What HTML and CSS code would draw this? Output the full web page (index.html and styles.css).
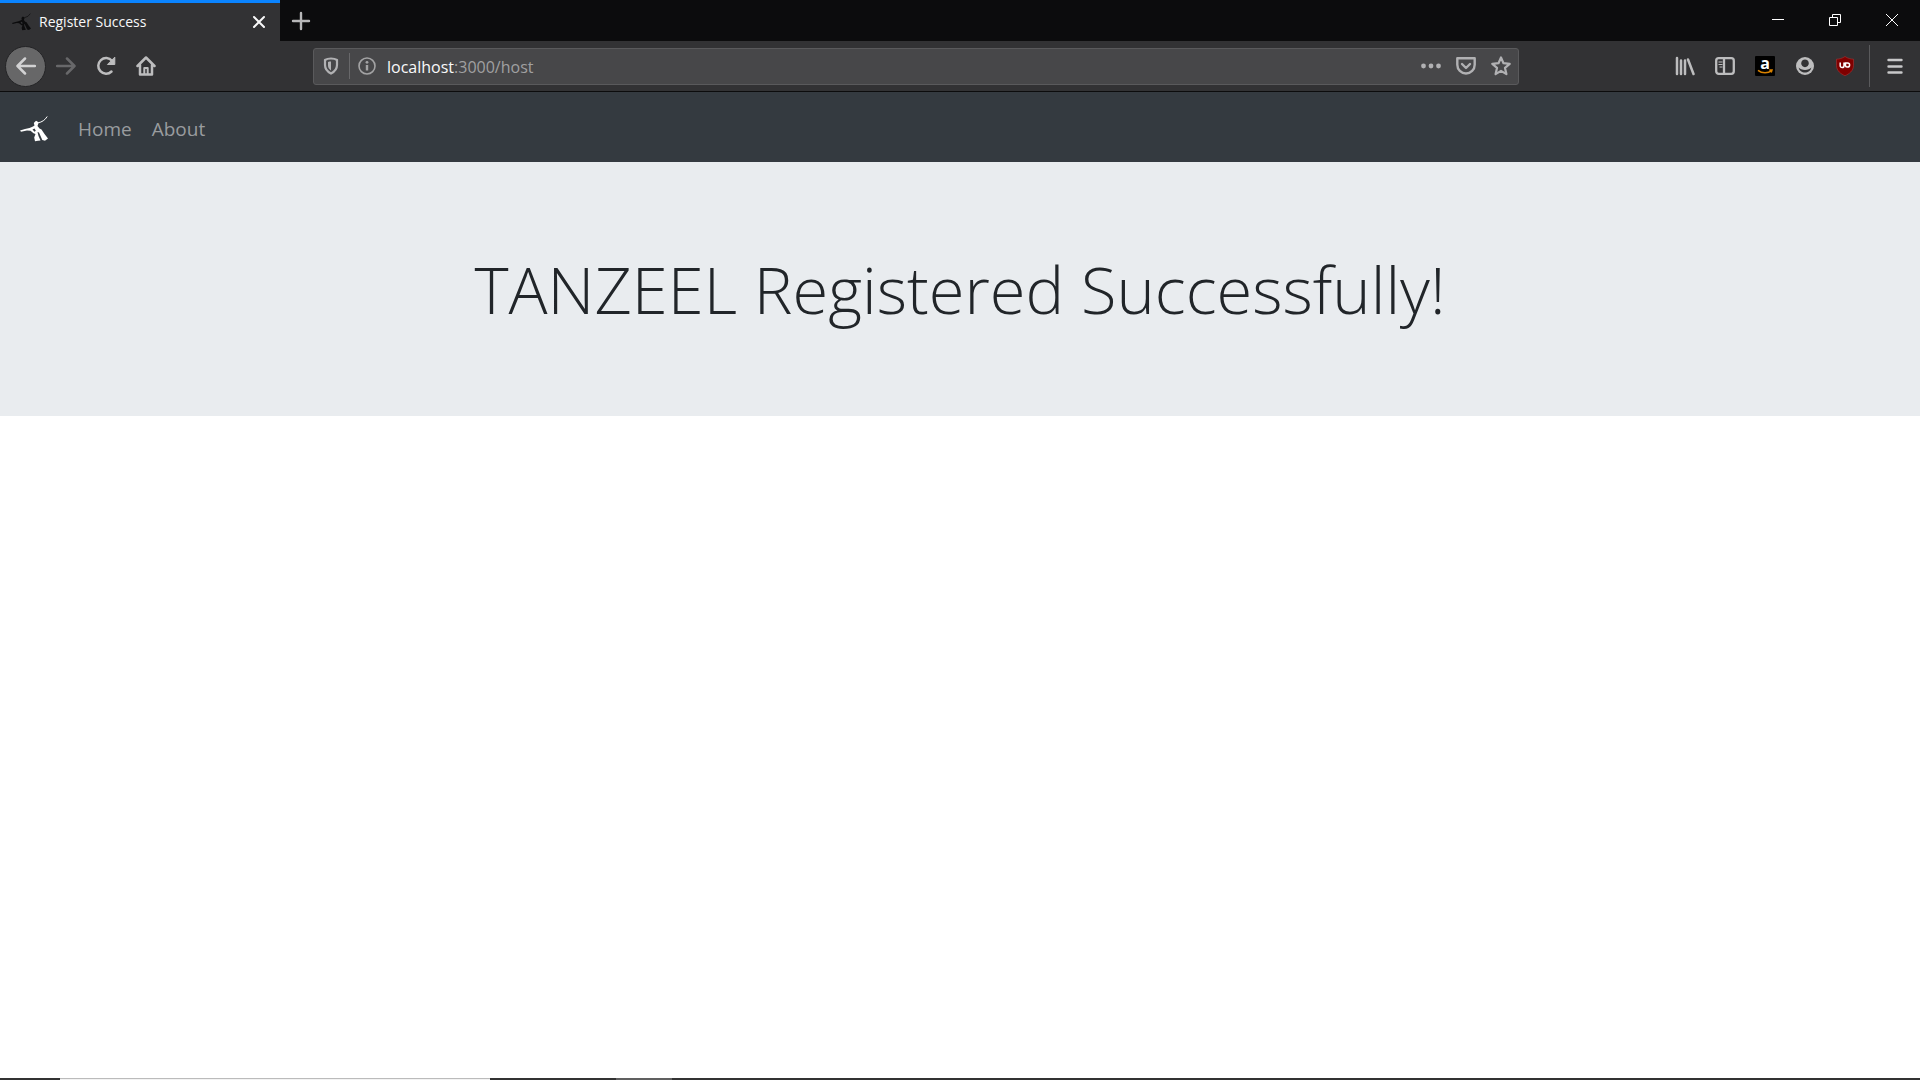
FILE: index.html
```html
<!DOCTYPE html>
<html lang="en">
<head>
<meta charset="utf-8">
<meta name="viewport" content="width=device-width, initial-scale=1">
<title>Register Success</title>
<link rel="stylesheet" href="styles.css">
</head>
<body>
<svg class="defs" aria-hidden="true">
  <symbol id="flutist" viewBox="0 0 28 26">
    <path d="M0 14.600L5 13L9.500 12L13 10.500L14.500 9.500L13.800 7L16 4.800L17.500 5.500L18.500 7L17.500 10L19.500 12.500L21.500 13.500L24.500 18L28 22.500L25 24.800L22.300 24L19 16.500L17.500 16L18.500 20L20.500 24.500L18 24.800L15 25.300L14.200 21.500L15.500 18L13.500 17.300L10.500 14.800L7 14.600L1 15.800ZM12.500 13.500L14.500 15.800L15.800 14.800L14.500 12.500Z" fill-rule="evenodd"/>
    <path d="M18 6.800Q24 5.800 27.200 .5" fill="none" stroke="currentColor"/>
  </symbol>
</svg>
<div class="window">
  <header class="browser">
    <div class="tabstrip">
      <div class="tab">
        <svg class="favicon" viewBox="0 0 28 26"><use href="#flutist"/></svg>
        <span class="tab-title">Register Success</span>
        <button class="tab-close" aria-label="Close tab"><svg width="14" height="14" viewBox="0 0 14 14"><path d="M2 2l10 10M12 2L2 12" stroke="#f9f9fa" stroke-width="2" stroke-linecap="round"/></svg></button>
      </div>
      <button class="new-tab" aria-label="New tab"><svg width="20" height="20" viewBox="0 0 20 20"><path d="M10 2v16M2 10h16" stroke="#b8b8b9" stroke-width="2.400" stroke-linecap="round"/></svg></button>
      <div class="window-controls">
        <button aria-label="Minimize"><svg width="14" height="14" viewBox="0 0 14 14"><path d="M1 6.500h12" stroke="#fff"/></svg></button>
        <button aria-label="Restore"><svg width="14" height="14" viewBox="0 0 14 14" fill="none" stroke="#fff"><path d="M1.500 4.500h8v8h-8zM4.500 4.500v-3h8v8h-3"/></svg></button>
        <button aria-label="Close"><svg width="14" height="14" viewBox="0 0 14 14"><path d="M1 1l12 12M13 1L1 13" stroke="#fff"/></svg></button>
      </div>
    </div>
    <div class="toolbar">
      <div class="nav-buttons">
        <button class="back" aria-label="Back"><svg width="20" height="20" viewBox="0 0 20 20" fill="none" stroke="#d2d2d3" stroke-width="2.500" stroke-linecap="round" stroke-linejoin="round"><path d="M19 10H2M9 2.500L1.500 10L9 17.500"/></svg></button>
        <button aria-label="Forward"><svg width="20" height="20" viewBox="0 0 20 20" fill="none" stroke="#68686a" stroke-width="2.500" stroke-linecap="round" stroke-linejoin="round"><path d="M1 10h17M11 2.500L18.500 10L11 17.500"/></svg></button>
        <button aria-label="Reload"><svg width="20" height="20" viewBox="0 0 20 20" fill="none" stroke="#bdbdbe" stroke-width="2.500" stroke-linecap="round"><path d="M15.500 15.500A7.800 7.800 0 1 1 16 4.800"/><path d="M18.800 1.500v7h-7z" fill="#bdbdbe" stroke-width="1" stroke-linejoin="round"/></svg></button>
        <button aria-label="Home page"><svg width="20" height="20" viewBox="0 0 20 20" fill="none" stroke="#bdbdbe" stroke-width="2.500" stroke-linecap="round" stroke-linejoin="round"><path d="M1.500 10L10 1.500L18.500 10M4 9v9.500h12V9"/><path d="M8.300 18v-6h3.400v6" stroke-width="2"/></svg></button>
      </div>
      <div class="urlbar">
        <button class="shield" aria-label="Tracking protection"><svg width="16" height="18" viewBox="0 0 16 18"><path d="M8 1.500c2 0 4.500.5 6 1.500v5c0 4-2 6.500-6 8.500c-4-2-6-4.500-6-8.500V3c1.500-1 4-1.500 6-1.500z" fill="none" stroke="#b1b1b3" stroke-width="2.200"/><path d="M8 4.500v9C5.800 12 5 10.500 5 8V5c1-.4 2-.5 3-.5z" fill="#b1b1b3"/></svg></button>
        <button class="info" aria-label="Site information"><svg width="18" height="18" viewBox="0 0 18 18"><circle cx="9" cy="9" r="8" fill="none" stroke="#a3a3a4" stroke-width="1.600"/><circle cx="9" cy="5.300" r="1.400" fill="#a3a3a4"/><path d="M9 8v5.500" stroke="#a3a3a4" stroke-width="2.400"/></svg></button>
        <a class="address" href="#"><span class="host">localhost</span>:3000/host</a>
        <div class="page-actions">
          <button aria-label="Page actions"><svg width="20" height="20" viewBox="0 0 20 20" fill="#b1b1b3"><circle cx="2.500" cy="10" r="2.400"/><circle cx="10" cy="10" r="2.400"/><circle cx="17.500" cy="10" r="2.400"/></svg></button>
          <button aria-label="Save to Pocket"><svg width="20" height="20" viewBox="0 0 20 20" fill="none" stroke="#b1b1b3" stroke-width="2.400" stroke-linecap="round" stroke-linejoin="round"><path d="M1.300 2.300h17.400v6.500a8.700 8.700 0 0 1-17.400 0z"/><path d="M6 8l4 4l4-4"/></svg></button>
          <button aria-label="Bookmark"><svg width="20" height="20" viewBox="0 0 20 20"><path d="M10 1.500l2.500 5.700l6.200.6l-4.700 4.100l1.400 6.200l-5.400-3.200l-5.400 3.200l1.400-6.200l-4.700-4.100l6.200-.6z" fill="none" stroke="#b1b1b3" stroke-width="2.200" stroke-linejoin="round"/></svg></button>
        </div>
      </div>
      <div class="tools">
        <button aria-label="Library"><svg width="20" height="20" viewBox="0 0 20 20" stroke="#bdbdbe" stroke-width="2.500" stroke-linecap="round"><path d="M2 2v16M6 4.500V18M10 4.500V18"/><path d="M13 3.500l5.500 14.500"/></svg></button>
        <button aria-label="Sidebars"><svg width="20" height="20" viewBox="0 0 20 20" fill="none" stroke="#bdbdbe" stroke-width="2.300"><rect x="1.200" y="2.200" width="17.600" height="15.600" rx="2.500"/><path d="M9 2v16"/><path d="M3.500 6h4M3.500 8.500h4M4.500 11h3" stroke-width="1.200"/></svg></button>
        <button aria-label="Amazon"><svg width="20" height="20" viewBox="0 0 20 20"><rect width="20" height="20" rx="1" fill="#000"/><text x="10" y="13" text-anchor="middle" class="amazon-a">a</text><path d="M3 14.300c4 3.200 10 3.200 13.500.3M14.300 14h2.700l-.8 2.500" fill="none" stroke="#d98200" stroke-width="1.500"/></svg></button>
        <button aria-label="Account"><svg width="20" height="20" viewBox="0 0 20 20"><circle cx="10" cy="10" r="9" fill="#bdbdbe"/><path d="M10 3.500a3.800 3.800 0 0 1 2.700 6.500c-1.300 1.500-4.100 1.500-5.400 0A3.800 3.800 0 0 1 10 3.500zM3.700 11.500c2 3.300 10.600 3.300 12.600 0c-1 6.700-11.600 6.700-12.600 0z" fill="#323234"/></svg></button>
        <button aria-label="uBlock Origin"><svg width="20" height="20" viewBox="0 0 20 20"><path d="M10 .5c3 2 5.500 2.500 8.500 2.700v6C18.500 15 14 18 10 19.700C6 18 1.500 15 1.500 9.200v-6C4.500 3 7 2.500 10 .5z" fill="#800000" stroke="#a33" stroke-width=".6"/><path d="M5.200 6.500v3.200a1.900 1.900 0 0 0 3.800 0V6.500M10.500 6.900h2a2.100 2.100 0 0 1 0 4.200h-.5a1.600 1.600 0 0 1-1.500-1.600z" fill="none" stroke="#fff" stroke-width="1.500"/></svg></button>
        <button class="menu" aria-label="Menu"><svg width="16" height="20" viewBox="0 0 16 20"><path d="M1.500 4h13M1.500 10.500h13M1.500 16.500h13" stroke="#c8c8c9" stroke-width="2.400" stroke-linecap="round"/></svg></button>
      </div>
    </div>
  </header>
  <nav class="navbar">
    <a class="brand" href="#" aria-label="Brand"><svg width="28" height="26"><use href="#flutist"/></svg></a>
    <a class="nav-link" href="#">Home</a>
    <a class="nav-link" href="#">About</a>
  </nav>
  <main class="content">
    <section class="jumbotron"><h1>TANZEEL Registered Successfully!</h1></section>
  </main>
  <footer class="taskbar"><span class="search"></span><span class="active-app"></span></footer>
</div>
</body>
</html>
```
FILE: styles.css
```css
* { box-sizing: border-box; }
body {
  margin: 0;
  background: #fff;
  font-family: "Open Sans", "Noto Sans", sans-serif;
}
button {
  display: flex;
  align-items: center;
  justify-content: center;
  padding: 0;
  border: 0;
  background: none;
}
a { text-decoration: none; }
svg { display: block; }
.defs { display: none; }
.window { display: flex; flex-direction: column; min-height: 100vh; }

.tabstrip { display: flex; height: 41px; background: #0c0c0d; }
.tab {
  display: flex;
  align-items: center;
  width: 280px;
  padding: 0 10px 0 12px;
  border-top: 3px solid #0a84ff;
  background: #323234;
}
.favicon { width: 19px; height: 18px; margin-right: 8px; color: #0c0c0d; fill: #0c0c0d; }
.tab-title { flex: 1; color: #f9f9fa; font-size: 14px; line-height: 20px; }
.tab-close { width: 22px; height: 22px; }
.new-tab { width: 42px; }
.window-controls { display: flex; margin-left: auto; }
.window-controls button { width: 57px; padding-bottom: 2px; }

.toolbar {
  display: flex;
  align-items: center;
  height: 51px;
  border-bottom: 1px solid #0c0c0d;
  background: #323234;
}
.nav-buttons { display: flex; padding-left: 5px; }
.nav-buttons button { width: 40px; height: 41px; }
.nav-buttons .back { width: 41px; border: 1px solid #242426; border-radius: 50%; background: #676768; }
.urlbar {
  display: flex;
  align-items: center;
  flex: 1;
  height: 37px;
  margin: 0 146px 0 147px;
  padding: 0 7px 0 5px;
  border: 1px solid #5a5a5c;
  border-radius: 3px;
  background: #474749;
}
.shield { width: 31px; height: 26px; padding-right: 6px; border-right: 1px solid #68686a; }
.info { width: 34px; }
.address { flex: 1; padding: 2px 0 0 3px; color: #a0a0a1; font-size: 16px; line-height: 24px; }
.host { color: #f9f9fa; }
.page-actions { display: flex; gap: 15px; }
.tools { display: flex; align-items: center; }
.tools button { width: 40px; height: 42px; }
.tools .menu { width: 51px; margin-left: 4px; border-left: 1px solid #5a5a5c; }
.amazon-a { fill: #fff; font: bold 16px "Open Sans", sans-serif; }

.navbar {
  display: flex;
  align-items: center;
  height: 70px;
  padding: 3px 20px 0;
  background: #343a40;
}
.brand { margin-right: 20px; color: #fff; fill: #fff; }
.nav-link { padding: 10px; color: #999c9f; font-size: 19px; line-height: 30px; }

.content { flex: 1; }
.jumbotron { padding: 80px 40px; background: #e9ecef; text-align: center; }
.jumbotron h1 {
  margin: 0;
  color: #212529;
  font-size: 65px;
  font-weight: 300;
  line-height: 94px;
}

.taskbar { display: flex; height: 2px; padding-left: 60px; background: #333; }
.search { width: 430px; border-top: 1px solid #bbb; background: #f3f3f3; }
.active-app { width: 56px; margin-left: 126px; background: #606060; }
```
